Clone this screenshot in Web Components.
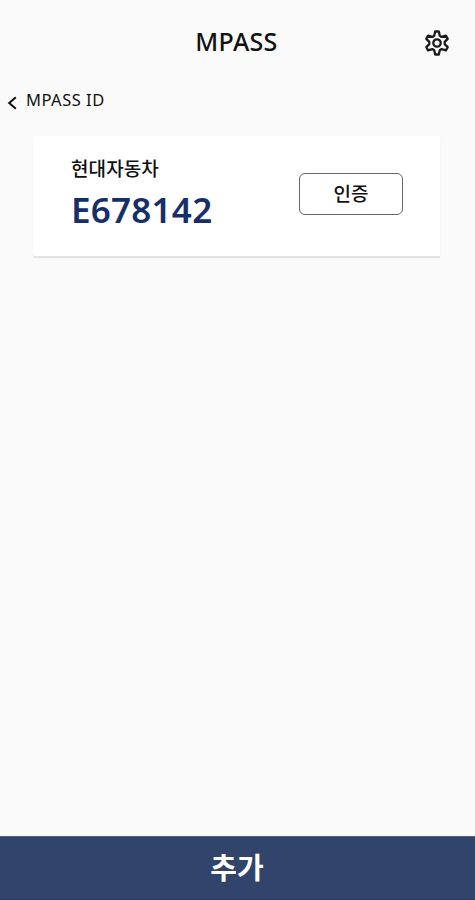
<!DOCTYPE html>
<html lang="ko">
<head>
<meta charset="utf-8">
<title>MPASS</title>
<style>
html,body{margin:0;height:100%}
body{background:#fafafa;color:#111;font-family:"Noto Sans","Noto Sans CJK KR",sans-serif}
</style>
</head>
<body>
<mpass-app></mpass-app>
<script>
function define(name, html){
  customElements.define(name, class extends HTMLElement{
    constructor(){
      super();
      this.attachShadow({mode:'open'}).innerHTML = html;
    }
  });
}
define('app-header', `<style>
:host{display:grid;grid-template-columns:76px 1fr 76px;align-items:center;height:84px}
h1{grid-column:2;margin:0;text-align:center;font-size:25px;line-height:32px;font-weight:500;letter-spacing:.3px;padding-right:2px;padding-bottom:3px}
svg{display:block;justify-self:center;width:26px;height:28px;margin-top:2px}
</style><h1><slot></slot></h1>
<svg viewBox="0 0 26 28" fill="none" stroke="#1b1b1b" stroke-width="2.3" stroke-linejoin="round"><path d="M11.2 2.5h3.6l1 4.3 1.8 1.1 4.3-1.3 1.8 3.3-3 3v2.2l3 3-1.8 3.3-4.3-1.3-1.8 1.1-1 4.3h-3.6l-1-4.3-1.8-1.1-4.3 1.3-1.8-3.3 3-3v-2.2l-3-3 1.8-3.3 4.3 1.3 1.8-1.1z"/><circle cx="13" cy="14" r="3.7"/></svg>`);
define('back-link', `<style>
:host{display:flex;align-items:center;height:32px;padding-left:7px;gap:8px}
svg{width:11px;height:14px;margin-top:6px}
span{font-size:16.5px;line-height:22px;letter-spacing:.5px;padding-bottom:1px}
</style><svg viewBox="0 0 11 14" fill="none" stroke="#111" stroke-width="2"><path d="M8.8 1.2 2.2 7l6.6 5.8"/></svg><span><slot></slot></span>`);
define('outline-button', `<style>
:host{display:block}
button{display:block;box-sizing:border-box;width:104px;height:42px;margin:0;padding:0 0 2px;border:1px solid #666;border-radius:6px;background:#fff;color:#111;font:500 19px/26px "Noto Sans CJK KR",sans-serif}
</style><button><slot></slot></button>`);
define('id-card', `<style>
:host{display:flex;justify-content:space-between;align-items:flex-start;box-sizing:border-box;height:120px;margin:20px 35px 0 33px;padding:18px 37px 0 38px;background:#fff;border-radius:4px 0 0 2px;box-shadow:0 2px 1px -0.5px #e2e2e2}
.name{font:500 19px/28px "Noto Sans CJK KR",sans-serif;letter-spacing:.1px}
.num{font-size:35px;line-height:46px;font-weight:600;color:#162f6b;margin-top:5px;letter-spacing:.25px}
slot[name=action]{display:block;margin-top:19px}
</style><div><div class="name"><slot name="company"></slot></div><div class="num"><slot name="number"></slot></div></div><slot name="action"></slot>`);
define('bottom-button', `<style>
:host{display:block;margin-top:auto}
button{display:block;box-sizing:border-box;width:100%;height:64px;border:0;border-top:1px solid #53617f;border-bottom:1px solid #293b61;margin:0;padding:0 1px 4px 0;background:#30446c;color:#fff;font:700 29px/40px "Noto Sans CJK KR",sans-serif}
</style><button><slot></slot></button>`);
define('mpass-app', `<style>
:host{display:flex;flex-direction:column;height:100vh;overflow:hidden}
</style>
<app-header>MPASS</app-header>
<back-link>MPASS ID</back-link>
<id-card><span slot="company">현대자동차</span><span slot="number">E678142</span><outline-button slot="action">인증</outline-button></id-card>
<bottom-button>추가</bottom-button>`);
</script>
</body>
</html>
